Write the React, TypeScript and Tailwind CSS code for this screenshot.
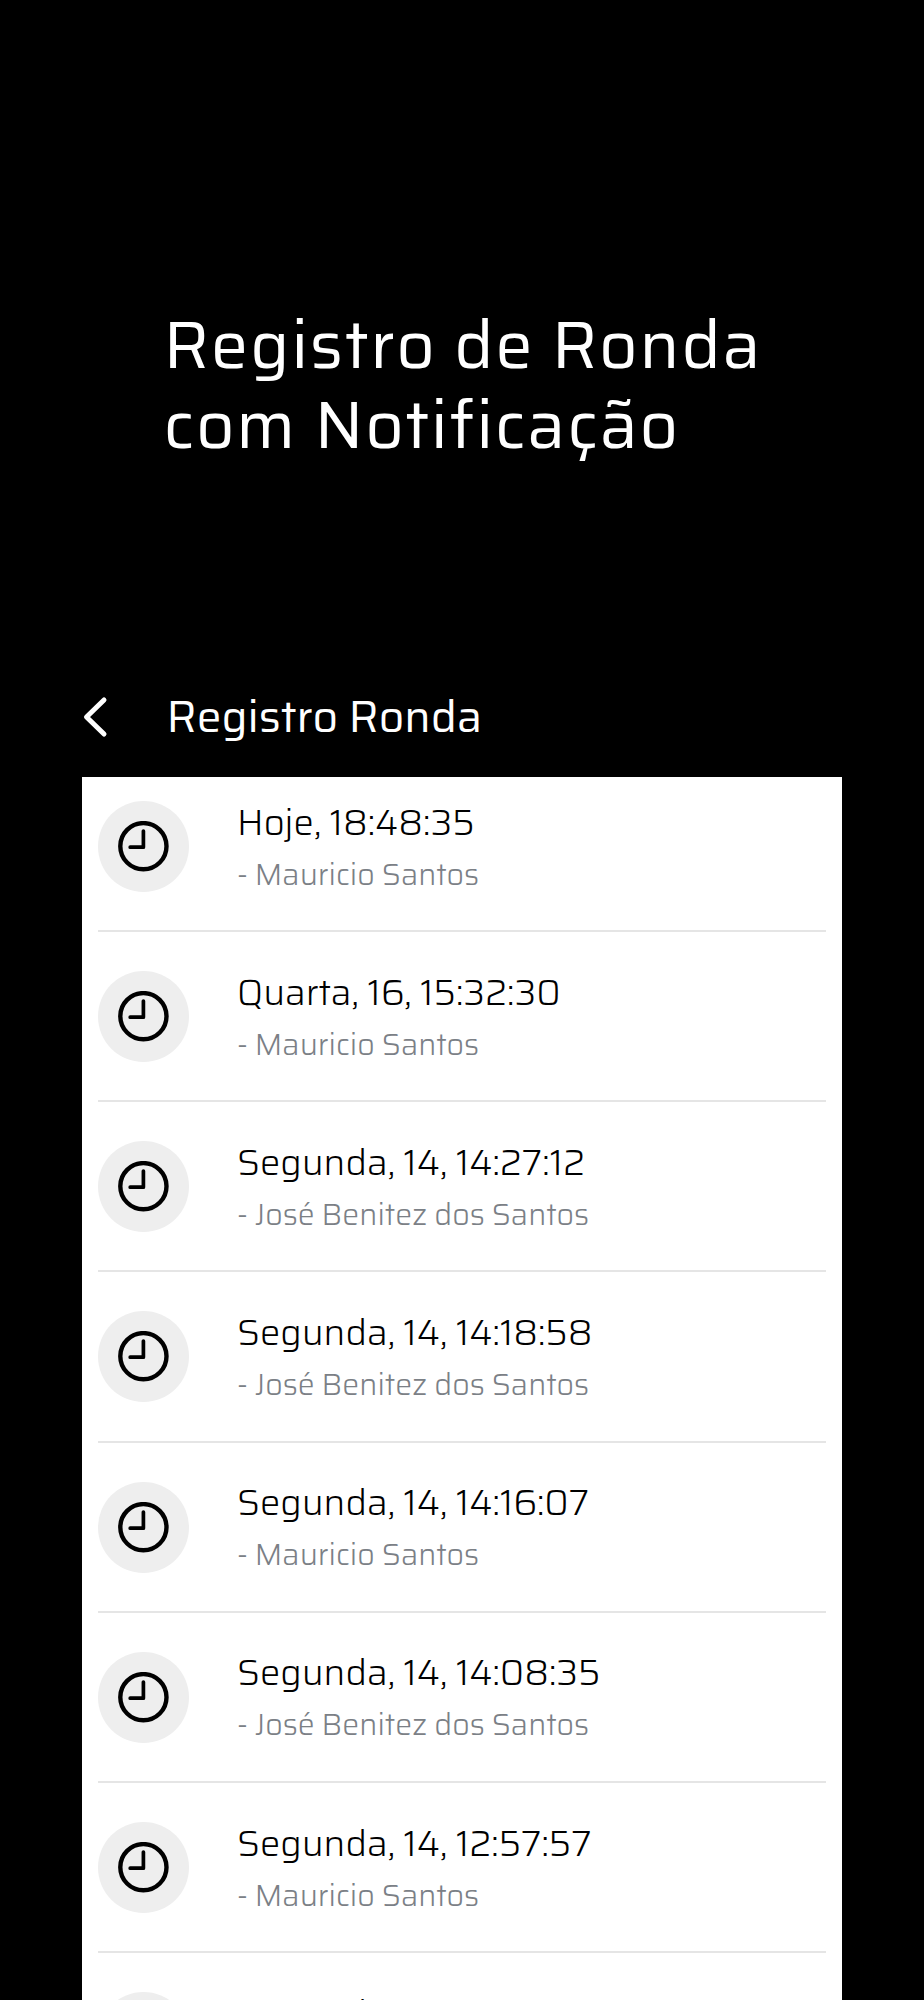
const rounds = [
  { time: 'Hoje, 18:48:35', guard: 'Mauricio Santos' },
  { time: 'Quarta, 16, 15:32:30', guard: 'Mauricio Santos' },
  { time: 'Segunda, 14, 14:27:12', guard: 'José Benitez dos Santos' },
  { time: 'Segunda, 14, 14:18:58', guard: 'José Benitez dos Santos' },
  { time: 'Segunda, 14, 14:16:07', guard: 'Mauricio Santos' },
  { time: 'Segunda, 14, 14:08:35', guard: 'José Benitez dos Santos' },
  { time: 'Segunda, 14, 12:57:57', guard: 'Mauricio Santos' },
  { time: 'Segunda', guard: 'Mauricio Santos' },
];

function ClockIcon() {
  return (
    <svg width="51" height="51" viewBox="0 0 51 51" fill="none" stroke="black">
      <circle cx="25.4" cy="25.2" r="23.1" strokeWidth="4.4" />
      <path d="M25.4 10V26.2H12.2" strokeWidth="3.7" strokeLinecap="round" strokeLinejoin="round" />
    </svg>
  );
}

function RoundRow({ time, guard }: { time: string; guard: string }) {
  return (
    <li className="flex h-[170.17px] shrink-0 items-start border-b-2 border-[#e5e5e5]">
      <div className="mt-[39px] flex size-[91px] shrink-0 items-center justify-center rounded-full bg-[#eeeeee]">
        <ClockIcon />
      </div>
      <div className="ml-[48px] mt-[34.6px] whitespace-nowrap font-light">
        <p className="text-[36.3px] leading-[52px] text-black">{time}</p>
        <p className="text-[30.25px] leading-[52.6px] text-[#7b8086]">- {guard}</p>
      </div>
    </li>
  );
}

export default function App() {
  return (
    <div className="flex h-[2000px] w-[924px] flex-col overflow-hidden bg-black font-['Saira','Roboto',sans-serif] text-white">
      <h1 className="ml-[163.5px] mt-[305px] h-[160px] whitespace-nowrap text-[67px] leading-[80px] tracking-[1.68px]">
        <span className="block">Registro de Ronda</span>
        <span className="block">com Notificação</span>
      </h1>

      <header className="mt-[212px] flex h-[80px] items-center pl-[82px]">
        <svg width="28" height="44" viewBox="0 0 28 44" fill="none" stroke="white" strokeWidth="5" strokeLinecap="round" strokeLinejoin="round">
          <path d="M22 5L4.5 22L22 39" />
        </svg>
        <h2 className="ml-[56.5px] whitespace-nowrap text-[44.3px] leading-[60px]">Registro Ronda</h2>
      </header>

      <main className="ml-[82px] mt-[20px] min-h-0 w-[760px] flex-1 overflow-hidden bg-white px-4">
        <ul className="-mt-[15px] flex flex-col">
          {rounds.map((round, i) => (
            <RoundRow key={i} time={round.time} guard={round.guard} />
          ))}
        </ul>
      </main>
    </div>
  );
}
